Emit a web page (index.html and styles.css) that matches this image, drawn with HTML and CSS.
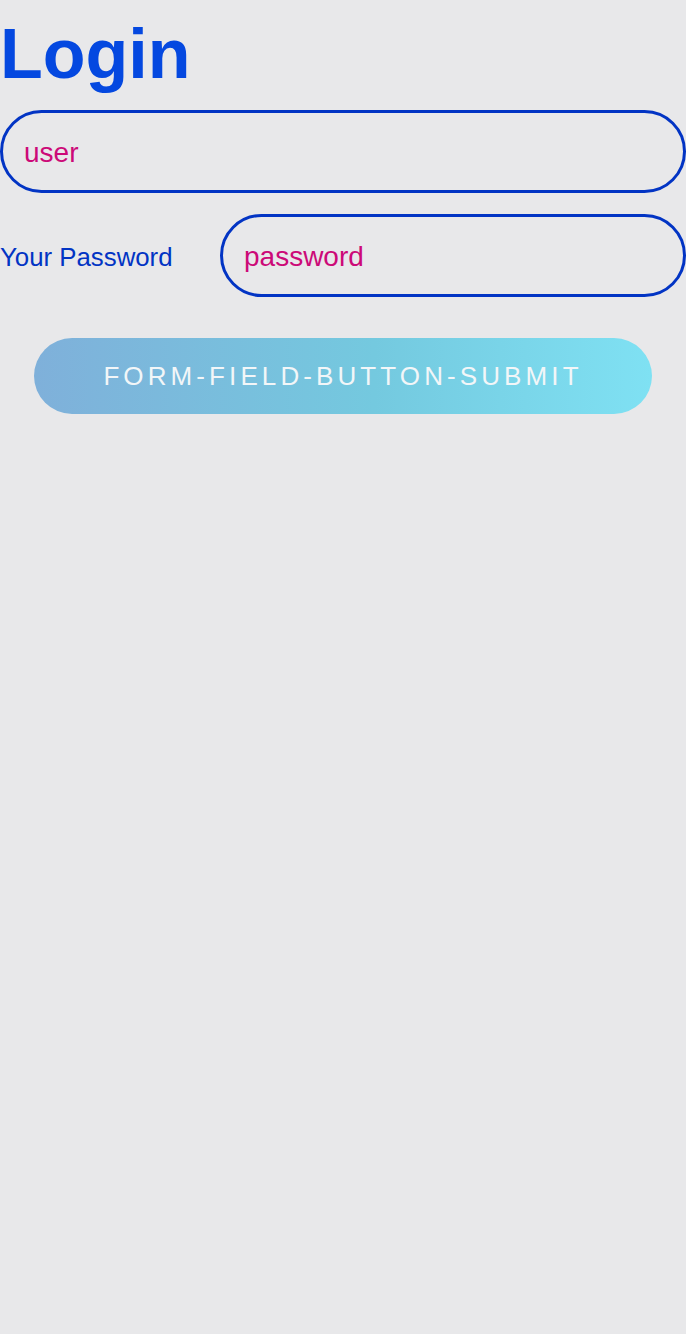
FILE: index.html
```html
<!DOCTYPE html>
<html lang="en">
<head>
<meta charset="utf-8">
<title>Login</title>
<link rel="stylesheet" href="styles.css">
</head>
<body>
<form class="login">
  <h1 class="login-title">Login</h1>
  <input class="field" type="text" value="user">
  <div class="field-row">
    <label class="field-label">Your Password</label>
    <input class="field field-grow" type="text" value="password">
  </div>
  <button class="submit" type="button">form-field-button-submit</button>
</form>
</body>
</html>
```

FILE: styles.css
```css
html, body {
  margin: 0;
  padding: 0;
  background: #e8e8ea;
  font-family: "Liberation Sans", Arial, sans-serif;
}

.login {
  display: flex;
  flex-direction: column;
}

.login-title {
  margin: 19px 0 21px 0;
  font-size: 70px;
  line-height: 1;
  font-weight: 700;
  color: #0448e0;
}

.field {
  box-sizing: border-box;
  height: 83px;
  width: 100%;
  margin: 0;
  padding: 3px 21px 0 21px;
  border: 3px solid #0234c4;
  border-radius: 42px;
  background: transparent;
  font-family: "Liberation Sans", Arial, sans-serif;
  font-size: 28px;
  color: #cc0a78;
  outline: none;
}

.field-row {
  display: flex;
  align-items: center;
  margin-top: 21px;
}

.field-label {
  flex: 0 0 220px;
  padding-top: 3px;
  font-size: 25.8px;
  color: #0234c4;
}

.field-grow {
  flex: 1;
  width: auto;
  min-width: 0;
}

.submit {
  align-self: center;
  width: 618px;
  height: 76px;
  margin-top: 41px;
  border: none;
  border-radius: 38px;
  background: linear-gradient(to right, #7fb0da 0%, #74c9df 55%, #7fe1f3 100%);
  color: #f2f6f8;
  font-family: "Liberation Sans", Arial, sans-serif;
  font-size: 26px;
  letter-spacing: 4.1px;
  text-transform: uppercase;
  padding: 0;
}
```
